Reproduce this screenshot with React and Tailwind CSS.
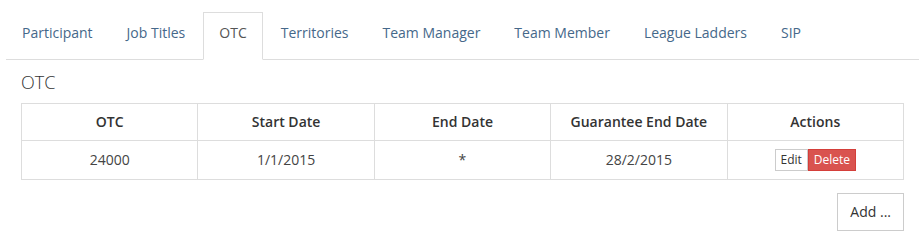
const tabs = ["Participant", "Job Titles", "OTC", "Territories", "Team Manager", "Team Member", "League Ladders", "SIP"];

const columns = ["OTC", "Start Date", "End Date", "Guarantee End Date", "Actions"];

const rows = [{ otc: "24000", start: "1/1/2015", end: "*", guarantee: "28/2/2015" }];

export default function App() {
  return (
    <div className="w-[913px] ml-[6px] pt-[12px] bg-white text-[14px] leading-[20px] text-[#333]" style={{ fontFamily: '"Open Sans", "Liberation Sans", sans-serif' }}>
      <ul className="flex border-b border-[#ddd]">
        {tabs.map(t => (
          <li key={t} className="mr-[2px] -mb-px">
            {t === "OTC" ? (
              <span className="block pt-[10px] pb-[16px] px-[15px] border border-[#ddd] border-b-transparent bg-white text-[#555]">{t}</span>
            ) : (
              <a href="#" className="block pt-[10px] pb-[16px] px-[15px] border border-transparent text-[#45688a]">{t}</a>
            )}
          </li>
        ))}
      </ul>

      <div className="px-[15px]">
        <h3 className="mt-[12px] text-[18px] leading-[20px] font-light text-[#333]">OTC</h3>

        <table className="mt-[11px] w-full table-fixed border-collapse border border-[#ddd]">
          <thead>
            <tr>
              {columns.map(c => (
                <th key={c} className="border border-[#ddd] p-[8px] font-semibold text-center text-[#333]">{c}</th>
              ))}
            </tr>
          </thead>
          <tbody>
            {rows.map(r => (
              <tr key={r.otc}>
                <td className="border border-[#ddd] p-[8px] text-center text-[#444]">{r.otc}</td>
                <td className="border border-[#ddd] p-[8px] text-center text-[#444]">{r.start}</td>
                <td className="border border-[#ddd] p-[8px] text-center text-[#444]">{r.end}</td>
                <td className="border border-[#ddd] p-[8px] text-center text-[#444]">{r.guarantee}</td>
                <td className="border border-[#ddd] p-[8px] text-center">
                  <div className="flex justify-center">
                    <button className="px-[5px] py-px text-[12px] leading-[18px] border border-[#ccc] bg-white text-[#333]">Edit</button>
                    <button className="px-[5px] py-px text-[12px] leading-[18px] border border-[#d43f3a] bg-[#d9534f] text-white">Delete</button>
                  </div>
                </td>
              </tr>
            ))}
          </tbody>
        </table>

        <div className="flex justify-end mt-[13px]">
          <button className="px-[12px] py-[8px] border border-[#ccc] bg-white text-[#333] text-[14px] leading-[20px]">Add ...</button>
        </div>
      </div>
    </div>
  );
}
